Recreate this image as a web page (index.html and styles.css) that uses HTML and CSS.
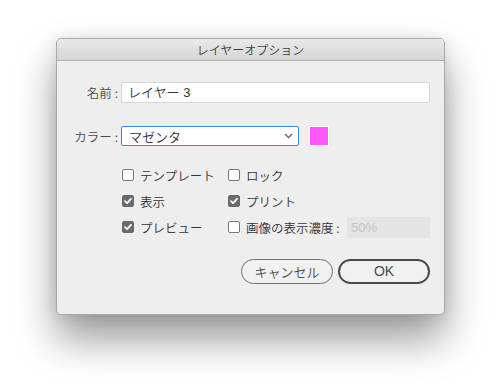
FILE: index.html
```html
<!DOCTYPE html>
<html lang="ja">
<head>
<meta charset="utf-8">
<title>レイヤーオプション</title>
<link rel="stylesheet" href="styles.css">
</head>
<body>
<div class="dialog">
  <div class="titlebar">レイヤーオプション</div>
  <div class="content">
    <div class="row name-row">
      <span class="label">名前 :</span>
      <div class="textfield">レイヤー 3</div>
    </div>
    <div class="row color-row">
      <span class="label">カラー :</span>
      <div class="select">
        <span>マゼンタ</span>
        <svg class="chevron" width="9" height="6" viewBox="0 0 9 6"><path d="M1 1 L4.5 4.5 L8 1" fill="none" stroke="#6a6a6a" stroke-width="1.4"/></svg>
      </div>
      <div class="swatch"></div>
    </div>
    <div class="checks">
      <div class="check"><span class="box"></span><span>テンプレート</span></div>
      <div class="check"><span class="box"></span><span>ロック</span></div>
      <div class="check"><span class="box on"><svg width="12" height="12" viewBox="0 0 12 12"><path d="M3 6.2 L5.1 8.2 L9 3.8" fill="none" stroke="#fff" stroke-width="1.8" stroke-linecap="round" stroke-linejoin="round"/></svg></span><span>表示</span></div>
      <div class="check"><span class="box on"><svg width="12" height="12" viewBox="0 0 12 12"><path d="M3 6.2 L5.1 8.2 L9 3.8" fill="none" stroke="#fff" stroke-width="1.8" stroke-linecap="round" stroke-linejoin="round"/></svg></span><span>プリント</span></div>
      <div class="check"><span class="box on"><svg width="12" height="12" viewBox="0 0 12 12"><path d="M3 6.2 L5.1 8.2 L9 3.8" fill="none" stroke="#fff" stroke-width="1.8" stroke-linecap="round" stroke-linejoin="round"/></svg></span><span>プレビュー</span></div>
      <div class="check"><span class="box"></span><span class="dimlabel">画像の表示濃度 :</span><div class="dimfield">50%</div></div>
    </div>
    <div class="buttons">
      <div class="btn">キャンセル</div>
      <div class="btn default">OK</div>
    </div>
  </div>
</div>
</body>
</html>
```
FILE: styles.css
```css
html, body {
  margin: 0;
  padding: 0;
  background: #ffffff;
}
body {
  width: 501px;
  height: 389px;
  padding: 38px 0 0 56px;
  box-sizing: border-box;
  font-family: "Liberation Sans", "Noto Sans CJK JP", sans-serif;
  color: #333;
  overflow: hidden;
}
.dialog {
  width: 389px;
  height: 277px;
  box-sizing: border-box;
  border: 1px solid #a8a8a8;
  border-radius: 5px;
  background: #eeeeee;
  box-shadow: 0 24px 40px rgba(0, 0, 0, 0.40), 0 0 14px rgba(0, 0, 0, 0.10);
  overflow: hidden;
}
.titlebar {
  height: 21px;
  line-height: 21px;
  border-bottom: 1px solid #b4b4b4;
  background: linear-gradient(#e9e9e9, #d5d5d5);
  text-align: center;
  font-size: 12px;
  color: #404040;
  font-family: "Noto Sans CJK JP", sans-serif;
  font-weight: 350;
}
.content {
  padding: 21px 14px 0 0;
  font-size: 12.5px;
}
.row {
  display: flex;
  align-items: center;
}
.label {
  width: 61px;
  margin-right: 3px;
  text-align: right;
  white-space: nowrap;
  color: #4a4a4a;
  font-family: "Noto Sans CJK JP", sans-serif;
  font-weight: 350;
}
.textfield {
  width: 309px;
  height: 21px;
  box-sizing: border-box;
  background: #fff;
  border: 1px solid #d6d6d6;
  border-radius: 2px;
  padding-left: 6px;
  line-height: 19px;
  font-size: 13px;
  color: #333;
  font-weight: 350;
}
.color-row {
  margin-top: 23px;
}
.select {
  width: 178px;
  height: 20px;
  box-sizing: border-box;
  background: #fff;
  border: 1.5px solid #3c84ee;
  border-radius: 2px;
  display: flex;
  align-items: center;
  justify-content: space-between;
  padding: 0 5px 0 7px;
  font-size: 13px;
  color: #333;
  font-family: "Noto Sans CJK JP", sans-serif;
  font-weight: 350;
}
.swatch {
  width: 20px;
  height: 20px;
  box-sizing: border-box;
  margin-left: 10px;
  background: #fd58fc;
  border: 1px solid #fff;
}
.checks {
  display: grid;
  grid-template-columns: 106px auto;
  row-gap: 6px;
  margin: 19px 0 0 65px;
  font-family: "Noto Sans CJK JP", sans-serif;
  font-weight: 350;
}
.check {
  display: flex;
  align-items: center;
  height: 20px;
  white-space: nowrap;
  color: #333;
}
.box {
  width: 12px;
  height: 12px;
  box-sizing: border-box;
  border: 1px solid #777;
  border-radius: 2px;
  background: #fff;
  margin-right: 6px;
  display: flex;
  flex: none;
}
.box.on {
  background: #6b6b6b;
  border-color: #6b6b6b;
}
.box.on svg {
  margin: -1px;
}
.dimlabel {
  width: 101px;
}
.dimfield {
  width: 83px;
  height: 21px;
  box-sizing: border-box;
  background: #e4e4e4;
  border-radius: 2px;
  padding-left: 4px;
  line-height: 21px;
  font-family: "Liberation Sans", sans-serif;
  font-size: 13px;
  color: #c4c4c4;
}
.buttons {
  display: flex;
  justify-content: flex-end;
  gap: 5px;
  margin-top: 22px;
}
.btn {
  width: 92px;
  height: 25px;
  box-sizing: border-box;
  border: 1px solid #6f6f6f;
  border-radius: 13px;
  background: #f1f1f1;
  text-align: center;
  line-height: 23px;
  font-size: 13px;
  color: #4a4a4a;
  font-family: "Noto Sans CJK JP", sans-serif;
  font-weight: 350;
}
.btn.default {
  border: 2px solid #4a4a4a;
  line-height: 21px;
  font-family: "Liberation Sans", sans-serif;
  font-size: 14px;
}
```
